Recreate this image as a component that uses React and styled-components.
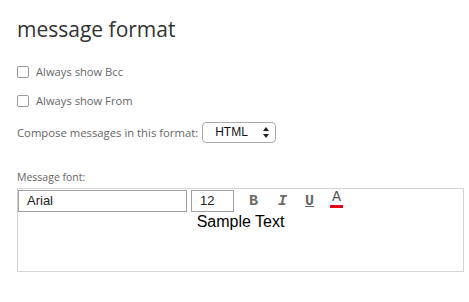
import React from 'react';
import styled, { createGlobalStyle } from 'styled-components';

const GlobalStyle = createGlobalStyle`
  html, body {
    margin: 0;
    padding: 0;
    background: #fff;
  }
`;

const Page = styled.div`
  width: 469px;
  height: 302px;
  box-sizing: border-box;
  padding: 14px 6px 0 17px;
  font-family: 'Open Sans', 'Noto Sans', sans-serif;
  color: #666;
`;

const Title = styled.h1`
  margin: 0;
  font-size: 21px;
  font-weight: 400;
  line-height: 30px;
  color: #333;
`;

const CheckRow = styled.label`
  display: flex;
  align-items: center;
  gap: 7px;
  height: 29px;
  font-size: 11.2px;
  margin-top: ${p => p.first ? '13px' : '0'};
`;

const Box = styled.span`
  width: 10px;
  height: 10px;
  border: 1px solid #999;
  border-radius: 2px;
  background: #fff;
`;

const ComposeRow = styled.div`
  display: flex;
  align-items: center;
  gap: 4px;
  height: 22px;
  margin-top: 6px;
  font-size: 11.3px;
`;

const Select = styled.div`
  box-sizing: border-box;
  width: 74px;
  height: 21px;
  border: 1px solid #aaa;
  border-radius: 4px;
  display: flex;
  align-items: center;
  justify-content: space-between;
  padding: 0 6px 0 12px;
  font-family: 'Liberation Sans', Arial, sans-serif;
  font-size: 12px;
  color: #111;
`;

const Label = styled.div`
  margin-top: 27px;
  font-size: 10.5px;
  line-height: 14px;
`;

const Editor = styled.div`
  margin-top: 4px;
  box-sizing: border-box;
  width: 447px;
  height: 84px;
  border: 1px solid #d4d4d4;
  display: flex;
  flex-direction: column;
`;

const Toolbar = styled.div`
  display: flex;
  align-items: center;
  height: 23px;
`;

const Input = styled.div`
  box-sizing: border-box;
  width: ${p => p.w}px;
  height: 22px;
  margin-left: ${p => p.ml}px;
  border: 1px solid #a0a0a0;
  display: flex;
  align-items: center;
  padding-left: 8px;
  font-family: 'Liberation Sans', Arial, sans-serif;
  font-size: 13px;
  color: #222;
`;

const Tool = styled.span`
  display: inline-block;
  margin-left: ${p => p.ml}px;
  font-family: 'Liberation Mono', 'Courier New', monospace;
  font-weight: 700;
  font-style: ${p => p.italic ? 'italic' : 'normal'};
  text-decoration: ${p => p.under ? 'underline' : 'none'};
  font-size: 15px;
  line-height: 15px;
  color: #6a6a6a;
  align-self: flex-start;
  margin-top: 5px;
`;

const ColorTool = styled(Tool)`
  font-weight: 400;
  border-bottom: 3px solid #e2001a;
  padding: 0 2px;
  margin-top: 1px;
  color: #555;
`;

const Sample = styled.div`
  text-align: center;
  font-family: 'Liberation Sans', Arial, sans-serif;
  font-size: 16px;
  line-height: 16px;
  color: #000;
  margin-top: 2px;
`;

const Arrows = () => (
  <svg width="6" height="11" viewBox="0 0 6 11">
    <path d="M3 0 L6 4 L0 4 Z M3 11 L6 7 L0 7 Z" fill="#222" />
  </svg>
);

export default function App() {
  return (
    <Page>
      <GlobalStyle />
      <Title>message format</Title>
      <CheckRow first><Box />Always show Bcc</CheckRow>
      <CheckRow><Box />Always show From</CheckRow>
      <ComposeRow>
        Compose messages in this format:
        <Select>HTML<Arrows /></Select>
      </ComposeRow>
      <Label>Message font:</Label>
      <Editor>
        <Toolbar>
          <Input w={169} ml={0}>Arial</Input>
          <Input w={43} ml={4}>12</Input>
          <Tool ml={15}>B</Tool>
          <Tool ml={20} italic>I</Tool>
          <Tool ml={18} under>U</Tool>
          <ColorTool ml={16}>A</ColorTool>
        </Toolbar>
        <Sample>Sample Text</Sample>
      </Editor>
    </Page>
  );
}
